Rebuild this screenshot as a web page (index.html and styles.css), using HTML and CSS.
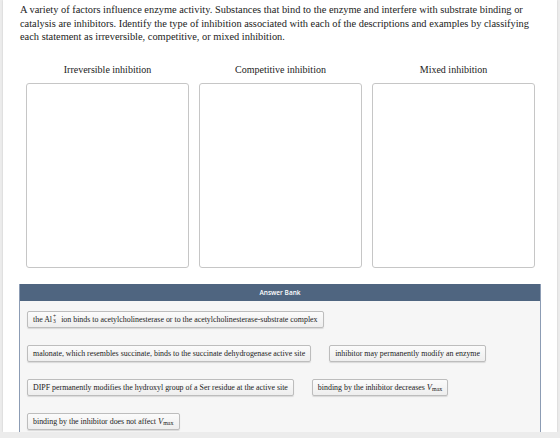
FILE: index.html
```html
<!DOCTYPE html>
<html lang="en">
  <head>
    <meta charset="UTF-8" />
    <title>Enzyme Inhibition</title>
    <link rel="stylesheet" href="styles.css">
  </head>
  <body>
    <div class="page">
      <p class="prompt">
        A variety of factors influence enzyme activity. Substances that bind to the enzyme and interfere with substrate binding or
        catalysis are inhibitors. Identify the type of inhibition associated with each of the descriptions and examples by classifying
        each statement as irreversible, competitive, or mixed inhibition.
      </p>

      <div class="columns">
        <div class="column">
          <div class="label">Irreversible inhibition</div>
          <div class="drop"></div>
        </div>
        <div class="column">
          <div class="label">Competitive inhibition</div>
          <div class="drop"></div>
        </div>
        <div class="column">
          <div class="label">Mixed inhibition</div>
          <div class="drop"></div>
        </div>
      </div>

      <div class="bank">
        <div class="bank-title">Answer Bank</div>
        <div class="bank-items">
          <div class="chip">the Al<span class="ion"><span>+</span><span>3</span></span> ion binds to acetylcholinesterase or to the acetylcholinesterase-substrate complex</div>
          <div class="chip">malonate, which resembles succinate, binds to the succinate dehydrogenase active site</div>
          <div class="chip">inhibitor may permanently modify an enzyme</div>
          <div class="chip">DIPF permanently modifies the hydroxyl group of a Ser residue at the active site</div>
          <div class="chip">binding by the inhibitor decreases <i>V</i><span class="sub">max</span></div>
          <div class="chip">binding by the inhibitor does not affect <i>V</i><span class="sub">max</span></div>
        </div>
      </div>
    </div>
  </body>
</html>
```

FILE: styles.css
```css
body {
  margin: 0;
  background-color: #ececec;
  font-family: "Liberation Serif", "Times New Roman", serif;
  color: #222;
}

.page {
  width: 554px;
  height: 432px;
  margin-left: 3px;
  background-color: #fff;
  box-shadow: 0 0 2px rgba(0, 0, 0, 0.15);
  overflow: hidden;
}

.prompt {
  margin: 0;
  padding: 3px 17px 0 17px;
  font-size: 10.4px;
  line-height: 13.5px;
}

.columns {
  display: flex;
  gap: 10px;
  margin-top: 20px;
  padding-left: 23px;
}

.column {
  width: 163px;
}

.label {
  text-align: center;
  font-size: 10px;
  line-height: 12px;
  margin-bottom: 7px;
}

.drop {
  height: 183px;
  border: 1.5px solid #c6c6c6;
  border-radius: 3px;
  background-color: #fff;
}

.bank {
  width: 520px;
  margin: 16px 0 0 16px;
  border-left: 1px solid #8c9cb4;
  border-right: 1px solid #8c9cb4;
}

.bank-title {
  background-color: #4f6580;
  color: #fff;
  font-family: "Open Sans", sans-serif;
  font-size: 6.5px;
  font-weight: 600;
  text-align: center;
  line-height: 17px;
}

.bank-items {
  display: flex;
  flex-wrap: wrap;
  align-items: flex-start;
  gap: 17px 18px;
  padding: 10px 7px 20px 7px;
  background-color: #f6f6f6;
}

.chip {
  display: flex;
  align-items: center;
  height: 11px;
  font-size: 7.9px;
  color: #222;
  padding: 2px 5px;
  border: 1px solid #bdbdbd;
  border-radius: 2px;
  background: linear-gradient(#fbfbfb, #eeeeee);
  box-shadow: 0 1px 1px rgba(0, 0, 0, 0.12);
  white-space: pre;
}

.chip i {
  font-size: 8.5px;
}

.sub {
  font-size: 6px;
  position: relative;
  top: 2px;
}

.ion {
  display: inline-flex;
  flex-direction: column;
  font-size: 5.5px;
  line-height: 5px;
  margin: 0 3px 0 1px;
}
```
